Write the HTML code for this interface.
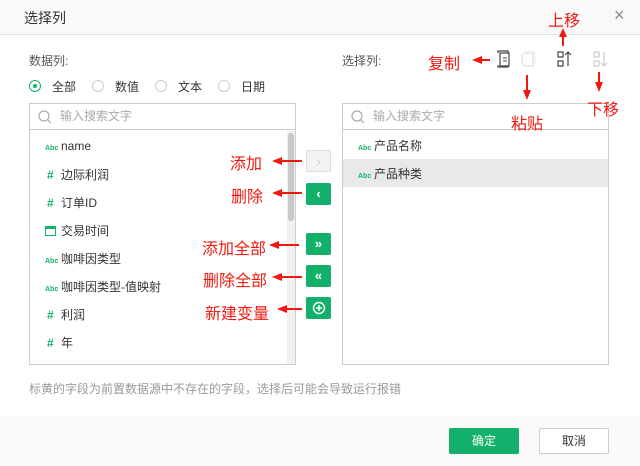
<!DOCTYPE html>
<html><head><meta charset="utf-8"><style>
*{box-sizing:border-box;margin:0;padding:0}
body{width:640px;height:466px;background:#fff;font-family:"Liberation Sans","Noto Sans CJK SC",sans-serif;font-size:12px;color:#333;position:relative;overflow:hidden}
.a{position:absolute}
.hdr{left:0;top:0;width:640px;height:35px;background:#f9f9f9;border-bottom:1px solid #e3e3e3}
.box{border:1px solid #ccc;background:#fff}
.srch{height:26px;border-bottom:1px solid #ccc;color:#aaa;font-size:12px;line-height:25px;padding-left:30px;position:relative}
.it{position:absolute;left:15px;font-size:12px;color:#333;white-space:nowrap}
.abc{color:#13b26d;font-size:7px;font-weight:bold;display:inline-block;width:16px}
.hash{color:#13b26d;font-weight:bold;display:inline-block;width:16px;font-size:12px;padding-left:2px}
.btn{width:25px;height:22px;border-radius:2px;background:#12b06a;color:#fff;text-align:center;line-height:21px;font-size:13px;font-weight:bold}
.red{color:#f0190f;font-size:16px;white-space:nowrap}
.rad{width:12px;height:12px;border:1px solid #ccc;border-radius:50%;display:inline-block}
</style></head><body>
<div class="a hdr"></div>
<div class="a" style="left:24px;top:8px;font-size:14px;color:#333">选择列</div>
<div class="a" style="left:614px;top:5px;font-size:18px;color:#888">×</div>
<div class="a" style="left:29px;top:52px;color:#555">数据列:</div>
<div class="a" style="left:29px;top:80px;width:12px;height:12px;border:1px solid #13b26d;border-radius:50%"><div style="width:4px;height:4px;background:#13b26d;border-radius:50%;margin:3px"></div></div>
<div class="a" style="left:52px;top:78px">全部</div>
<div class="a rad" style="left:92px;top:80px"></div><div class="a" style="left:115px;top:78px">数值</div>
<div class="a rad" style="left:155px;top:80px"></div><div class="a" style="left:178px;top:78px">文本</div>
<div class="a rad" style="left:218px;top:80px"></div><div class="a" style="left:241px;top:78px">日期</div>

<div class="a box" style="left:29px;top:103px;width:267px;height:262px">
<div class="srch"><svg class="a" style="left:8px;top:6px" width="14" height="14"><circle cx="6" cy="6" r="5" fill="none" stroke="#aaa" stroke-width="1.2"/><line x1="9.5" y1="9.5" x2="13" y2="13" stroke="#aaa" stroke-width="1.2"/></svg>输入搜索文字</div>
<div class="a" style="left:257px;top:27px;width:8px;height:233px;background:#f1f1f1"><div style="margin:2px 1px;width:6px;height:88px;background:#c8c8c8;border-radius:3px"></div></div>
<div class="it" style="top:35px"><span class="abc">Abc</span>name</div>
<div class="it" style="top:62px"><span class="hash">#</span>边际利润</div>
<div class="it" style="top:90px"><span class="hash">#</span>订单ID</div>
<div class="it" style="top:118px"><span style="display:inline-block;width:11px;height:10px;border:1.5px solid #13b26d;border-top-width:3px;margin-right:5px;vertical-align:-1px"></span>交易时间</div>
<div class="it" style="top:146px"><span class="abc">Abc</span>咖啡因类型</div>
<div class="it" style="top:174px"><span class="abc">Abc</span>咖啡因类型-值映射</div>
<div class="it" style="top:202px"><span class="hash">#</span>利润</div>
<div class="it" style="top:230px"><span class="hash">#</span>年</div>
</div>

<div class="a btn" style="left:306px;top:150px;background:#f3f3f3;border:1px solid #ddd;color:#ccc;font-weight:normal">›</div>
<div class="a btn" style="left:306px;top:183px">‹</div>
<div class="a btn" style="left:306px;top:233px">»</div>
<div class="a btn" style="left:306px;top:265px">«</div>
<div class="a btn" style="left:306px;top:297px"><svg width="14" height="14" style="margin-top:4px"><circle cx="7" cy="7" r="5.5" fill="none" stroke="#fff" stroke-width="1.4"/><path d="M7 4v6M4 7h6" stroke="#fff" stroke-width="1.4"/></svg></div>

<div class="a" style="left:342px;top:52px;color:#555">选择列:</div>
<svg class="a" style="left:494px;top:48px" width="120" height="22">
<path d="M4 5V3h10v16h-10v-2" fill="none" stroke="#444" stroke-width="1.2"/><rect x="6" y="5" width="9" height="13" fill="#fff" stroke="#444" stroke-width="1.2"/><path d="M9 10h4M9 13h4" stroke="#444"/>
<path d="M29 5h10v13h-8l-3-3v-9" fill="none" stroke="#ddd" stroke-width="1.2"/><path d="M32 3h9v13" fill="none" stroke="#ddd" stroke-dasharray="1 1"/>
<path d="M64 4h5v5h-5zM64 13h5v5h-5zM74 18V4M71 7l3-3 3 3" fill="none" stroke="#444" stroke-width="1.2"/>
<path d="M100 4h5v5h-5zM100 13h5v5h-5zM110 4v14M107 15l3 3 3-3" fill="none" stroke="#ccc" stroke-width="1.2"/>
</svg>

<div class="a box" style="left:342px;top:103px;width:267px;height:262px">
<div class="srch"><svg class="a" style="left:8px;top:6px" width="14" height="14"><circle cx="6" cy="6" r="5" fill="none" stroke="#aaa" stroke-width="1.2"/><line x1="9.5" y1="9.5" x2="13" y2="13" stroke="#aaa" stroke-width="1.2"/></svg>输入搜索文字</div>
<div class="a" style="left:0;top:55px;width:265px;height:28px;background:#e8e9eb"></div>
<div class="it" style="top:33px"><span class="abc">Abc</span>产品名称</div>
<div class="it" style="top:61px"><span class="abc">Abc</span>产品种类</div>
</div>

<div class="a" style="left:29px;top:380px;color:#999">标黄的字段为前置数据源中不存在的字段，选择后可能会导致运行报错</div>
<div class="a" style="left:0;top:416px;width:640px;height:50px;background:#fafafa"></div>
<div class="a" style="left:449px;top:428px;width:70px;height:26px;background:#12b06a;color:#fff;border-radius:2px;text-align:center;line-height:26px">确定</div>
<div class="a" style="left:539px;top:428px;width:70px;height:26px;background:#fff;border:1px solid #ccc;border-radius:2px;text-align:center;line-height:24px">取消</div>

<div class="a red" style="left:230px;top:150px">添加</div>
<div class="a red" style="left:231px;top:183px">删除</div>
<div class="a red" style="left:202px;top:235px">添加全部</div>
<div class="a red" style="left:203px;top:267px">删除全部</div>
<div class="a red" style="left:205px;top:300px">新建变量</div>
<div class="a red" style="left:428px;top:50px">复制</div>
<div class="a red" style="left:511px;top:110px">粘贴</div>
<div class="a red" style="left:548px;top:7px">上移</div>
<div class="a red" style="left:587px;top:96px">下移</div>
<svg class="a" style="left:0;top:0" width="640" height="466">
<g fill="#f0190f">
<path d="M272 161l10-4v3h20v2h-20v3z"/>
<path d="M272 193l10-4v3h20v2h-20v3z"/>
<path d="M269 245l10-4v3h20v2h-20v3z"/>
<path d="M272 277l10-4v3h20v2h-20v3z"/>
<path d="M277 309l10-4v3h15v2h-15v3z"/>
<path d="M472 60l10-4v3h8v2h-8v3z"/>
<path d="M527 100l-4-10h3v-15h2v15h3z"/>
<path d="M563 28l-4 9h3v9h2v-9h3z"/>
<path d="M599 92l-4-10h3v-10h2v10h3z"/>
</g></svg>
</body></html>
